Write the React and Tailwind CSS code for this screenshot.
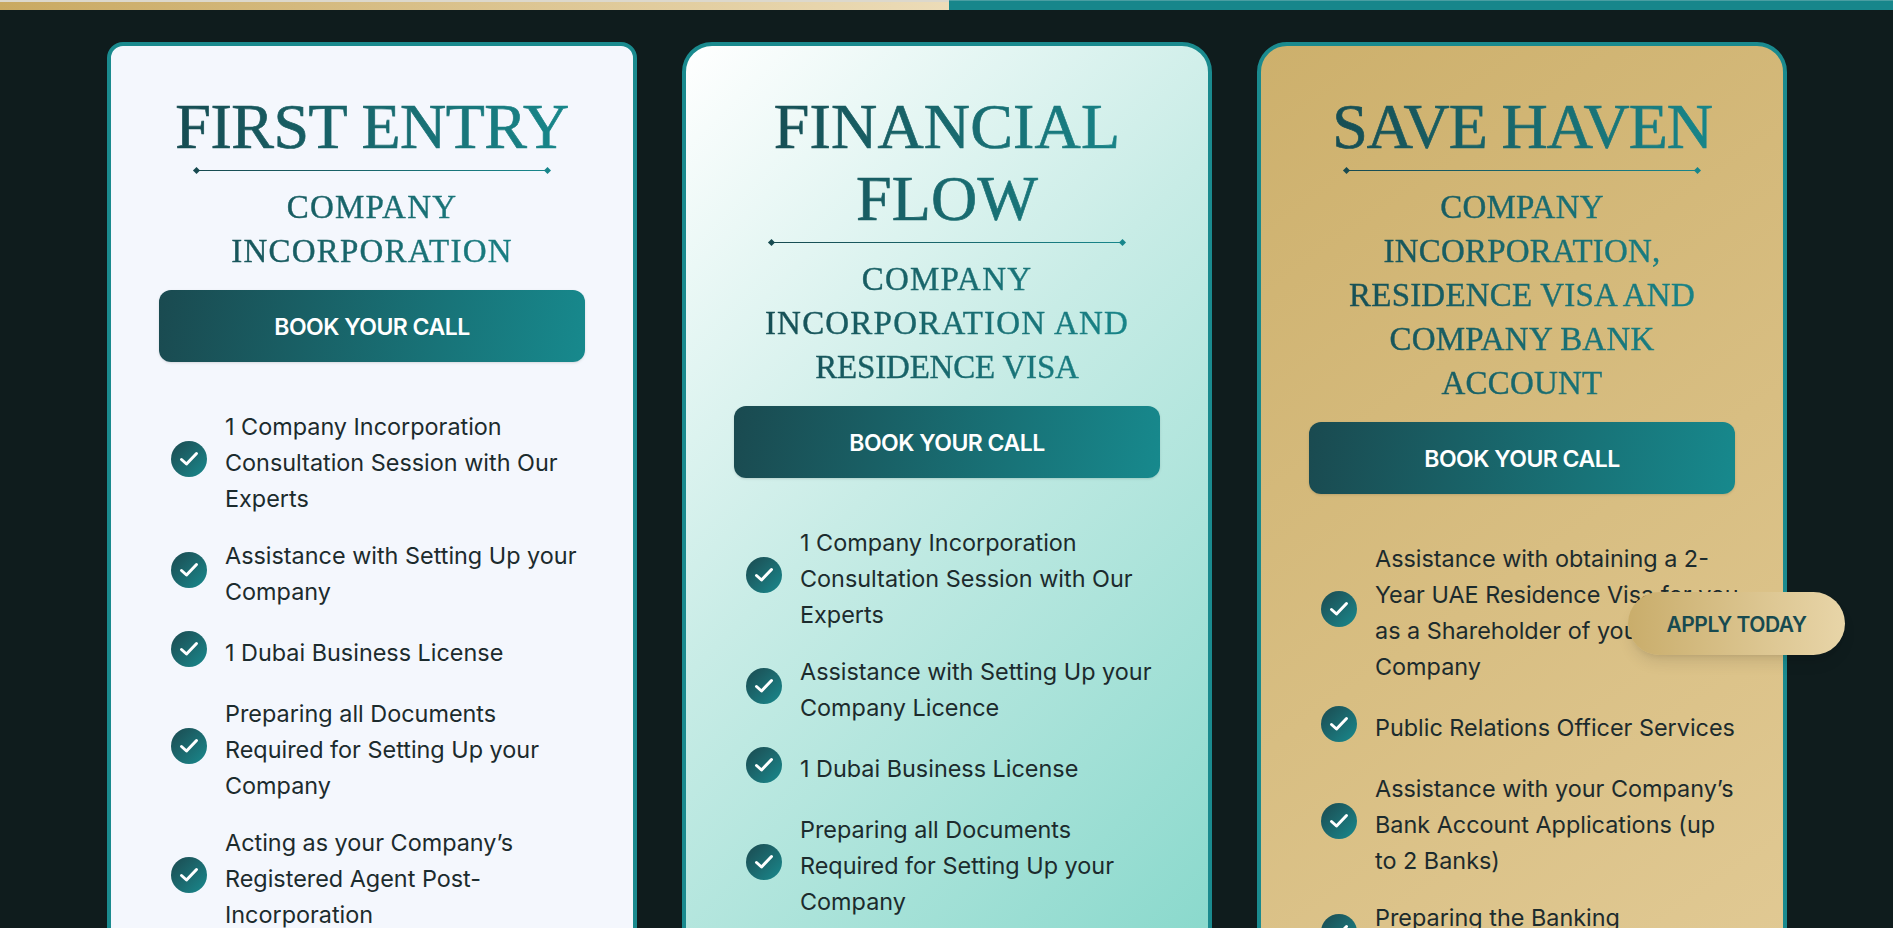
import React from "react";

const cards = [
  {
    title: "FIRST ENTRY",
    sub: ["COMPANY", "INCORPORATION"],
    bg: "bg-[#f4f7fd]",
    round: "rounded-2xl",
    titleTrack: "tracking-[-0.5px]",
    subTrack: "tracking-[1.2px]",
    items: [
      ["1 Company Incorporation", "Consultation Session with Our", "Experts"],
      ["Assistance with Setting Up your", "Company"],
      ["1 Dubai Business License"],
      ["Preparing all Documents", "Required for Setting Up your", "Company"],
      ["Acting as your Company’s", "Registered Agent Post-", "Incorporation"],
    ],
  },
  {
    title: "FINANCIAL FLOW",
    sub: ["COMPANY", "INCORPORATION AND", "RESIDENCE VISA"],
    bg: "bg-[linear-gradient(135deg,#ffffff_0%,#c8ece6_40%,#7dd5c7_100%)]",
    round: "rounded-[30px]",
    titleTrack: "tracking-[0.2px]",
    subTrack: "tracking-[1.2px]",
    items: [
      ["1 Company Incorporation", "Consultation Session with Our", "Experts"],
      ["Assistance with Setting Up your", "Company Licence"],
      ["1 Dubai Business License"],
      ["Preparing all Documents", "Required for Setting Up your", "Company"],
    ],
  },
  {
    title: "SAVE HAVEN",
    sub: ["COMPANY", "INCORPORATION,", "RESIDENCE VISA AND", "COMPANY BANK", "ACCOUNT"],
    bg: "bg-[linear-gradient(145deg,#cdb06c_0%,#e3cc98_100%)]",
    round: "rounded-[30px]",
    titleTrack: "tracking-[-1.1px]",
    subTrack: "tracking-[0.2px]",
    items: [
      ["Assistance with obtaining a 2-", "Year UAE Residence Visa for you", "as a Shareholder of your", "Company"],
      ["Public Relations Officer Services"],
      ["Assistance with your Company’s", "Bank Account Applications (up", "to 2 Banks)"],
      ["Preparing the Banking", "Documents"],
    ],
  },
];

function Divider() {
  return (
    <div className="flex items-center w-[356px] mx-auto">
      <span className="w-[5px] h-[5px] rotate-45 bg-[#174a50] shrink-0" />
      <span className="flex-1 h-[1.5px] bg-gradient-to-r from-[#174a50] to-[#17868b]" />
      <span className="w-[5px] h-[5px] rotate-45 bg-[#17868b] shrink-0" />
    </div>
  );
}

function CheckBadge() {
  return (
    <div className="w-9 h-9 mb-2 shrink-0 rounded-full bg-gradient-to-br from-[#1a4a50] to-[#178a8e] flex items-center justify-center">
      <svg width="20" height="16" viewBox="0 0 20 16" fill="none">
        <path d="M2.5 8.5 L7.5 13 L17.5 2.5" stroke="#ffffff" strokeWidth="3" strokeLinecap="round" strokeLinejoin="round" />
      </svg>
    </div>
  );
}

function Card({ card }) {
  return (
    <div className={`${card.bg} ${card.round} border-4 border-[#1a8a8e] px-12 pt-[45px] pb-12 min-h-[1060px]`}>
      <h2 className={`font-['Liberation_Serif',serif] text-[64px] leading-[72px] font-normal text-center bg-gradient-to-r from-[#164a50] to-[#17898d] bg-clip-text text-transparent [-webkit-text-stroke:0.7px_transparent] ${card.titleTrack}`}>
        {card.title}
      </h2>
      <div className="mt-[5px]">
        <Divider />
      </div>
      <div className={`mt-[12px] font-['Liberation_Serif',serif] text-[33px] leading-[44px] text-center bg-gradient-to-r from-[#164a50] to-[#17898d] bg-clip-text text-transparent [-webkit-text-stroke:0.4px_transparent] ${card.subTrack}`}>
        {card.sub.map((l) => (
          <div key={l} className={l === "RESIDENCE VISA" ? "tracking-[-0.2px]" : ""}>{l}</div>
        ))}
      </div>
      <div className="mt-[17px] h-[72px] pt-[2px] rounded-xl bg-[linear-gradient(100deg,#1a4a50_0%,#17898d_100%)] flex items-center justify-center shadow-sm">
        <span className="font-['Inter',sans-serif] text-[23px] font-semibold tracking-[-0.5px] text-white">BOOK YOUR CALL</span>
      </div>
      <ul className="mt-[47px] flex flex-col gap-[21px] pl-3">
        {card.items.map((lines, i) => (
          <li key={i} className="flex items-center gap-[18px]">
            <CheckBadge />
            <div className="font-['Inter',sans-serif] text-[23.4px] leading-9 text-[#1c2b2d] whitespace-nowrap">
              {lines.map((l) => (
                <div key={l}>{l}</div>
              ))}
            </div>
          </li>
        ))}
      </ul>
    </div>
  );
}

export default function App() {
  return (
    <div className="relative h-screen overflow-hidden bg-[#0f1c1d]">
      <div className="flex h-[10px]">
        <div className="w-[949px] border-t-2 border-[#dcd8cc] bg-gradient-to-r from-[#c9a961] to-[#ecdcb8]" />
        <div className="flex-1 border-t border-[#4a9ea2] bg-[#17868b]" />
      </div>
      <div className="grid grid-cols-[530px_530px_530px] gap-[45px] pl-[107px] pt-[32px]">
        {cards.map((c) => (
          <Card key={c.title} card={c} />
        ))}
      </div>
      <div className="absolute right-12 top-[592px] w-[217px] h-[63px] pt-[2px] rounded-full bg-gradient-to-r from-[#c9ad6b] to-[#e8d5a8] flex items-center justify-center shadow-lg">
        <span className="font-['Inter',sans-serif] text-[21px] font-semibold tracking-[-0.5px] text-[#174a50]">APPLY TODAY</span>
      </div>
    </div>
  );
}
